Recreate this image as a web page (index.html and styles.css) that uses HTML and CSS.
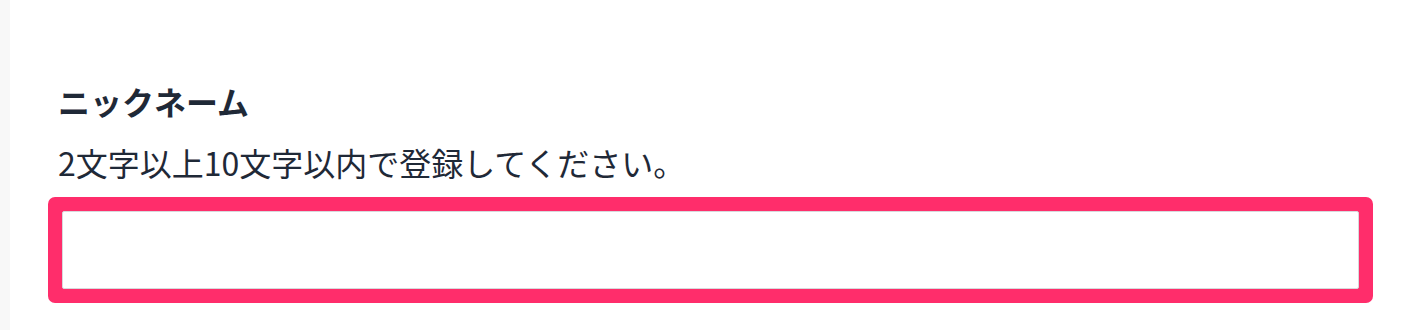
FILE: index.html
```html
<!DOCTYPE html>
<html lang="ja">
<head>
<meta charset="utf-8">
<title>ニックネーム</title>
<link rel="stylesheet" href="styles.css">
</head>
<body>
<div class="page">
  <div class="side"></div>
  <main class="main">
    <div class="field">
      <label class="label" for="nickname">ニックネーム</label>
      <p class="hint">2文字以上10文字以内で登録してください。</p>
      <div class="ring">
        <input class="input" id="nickname" type="text">
      </div>
    </div>
  </main>
</div>
</body>
</html>
```

FILE: styles.css
```css
html, body {
  margin: 0;
  padding: 0;
  background: #ffffff;
}
.page {
  display: flex;
  height: 330px;
  overflow: hidden;
  font-family: "Noto Sans CJK JP", "Noto Sans", sans-serif;
  color: #1f2937;
}
.side {
  width: 10px;
  flex: none;
  background: #f8f8f8;
}
.main {
  flex: 1;
  padding: 77px 29px 0 38px;
}
.field {
  display: flex;
  flex-direction: column;
}
.label {
  display: block;
  font-size: 32px;
  font-weight: 700;
  line-height: 48px;
  padding-left: 10px;
}
.hint {
  margin: 13px 0 0;
  font-size: 32px;
  line-height: 48px;
  padding-left: 10px;
}
.ring {
  margin-top: 11px;
  background: #ff2d6b;
  padding: 14px;
  border-radius: 7px;
}
.input {
  display: block;
  box-sizing: border-box;
  width: 100%;
  height: 78px;
  margin: 0;
  border: 1px solid #d8d8dc;
  border-radius: 2px;
  background: #ffffff;
  outline: none;
  font: inherit;
}
```
